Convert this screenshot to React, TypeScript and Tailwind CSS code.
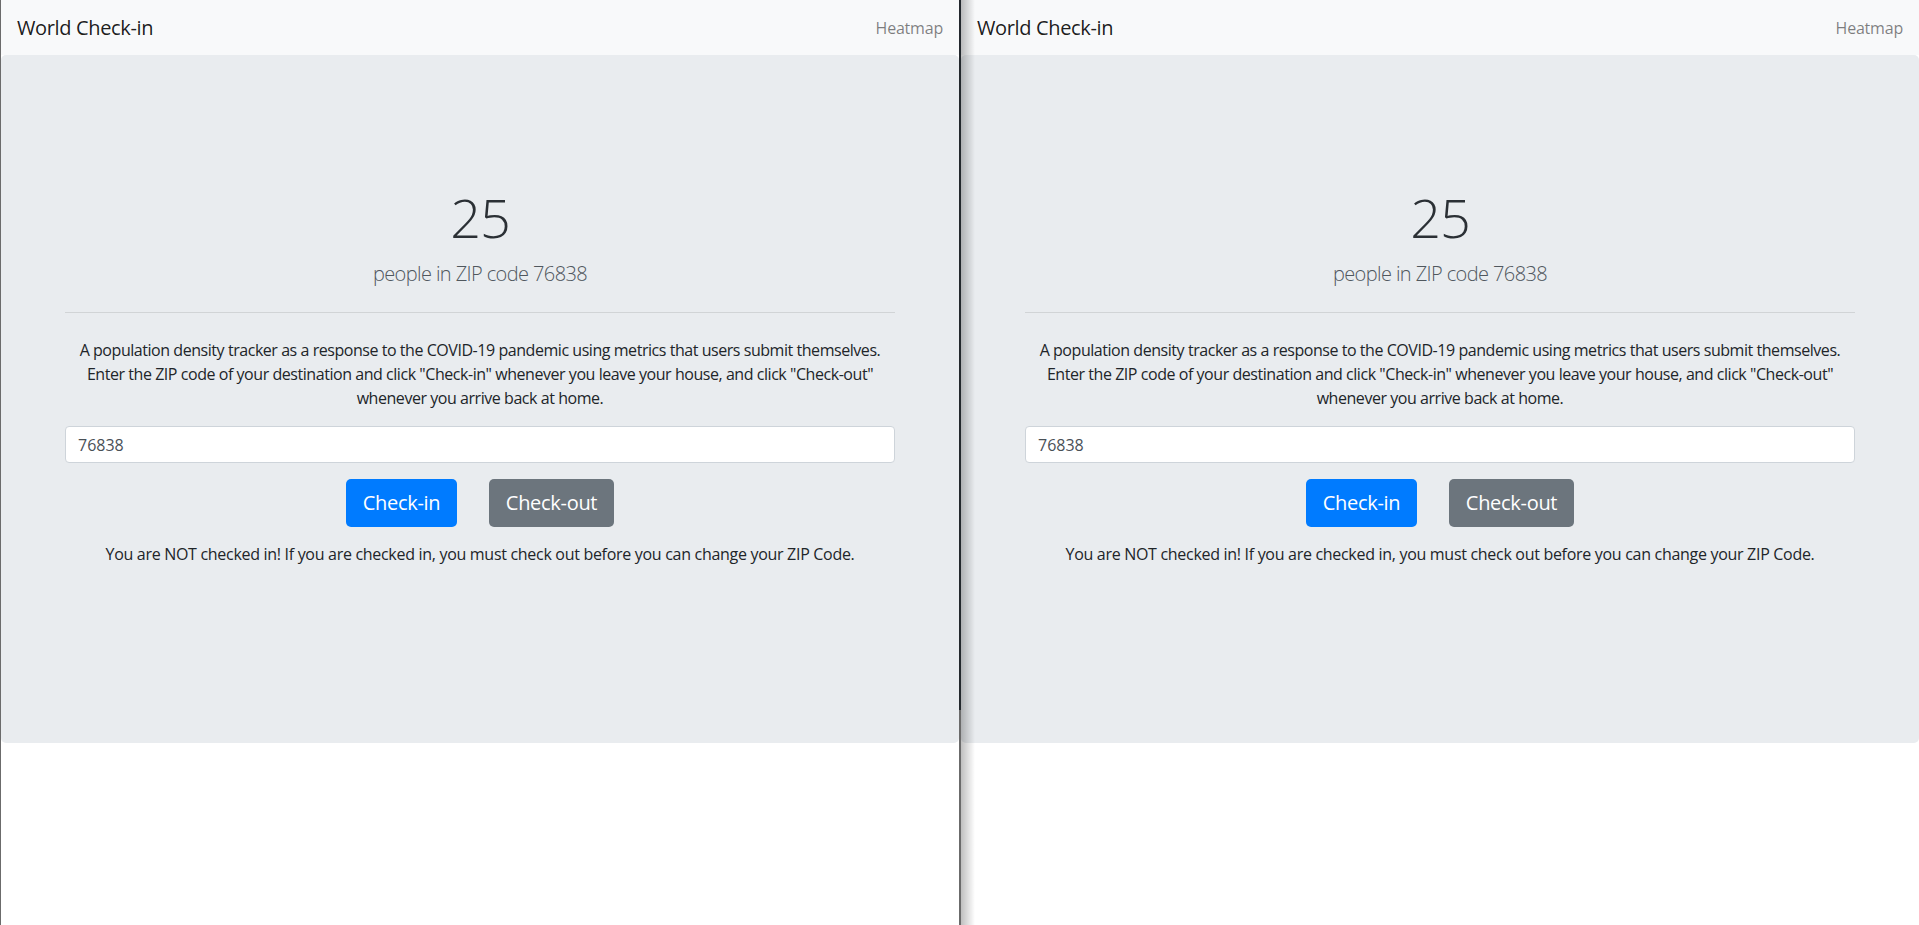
import React from "react";

const font = "font-['Open_Sans','Noto_Sans',sans-serif]";

function Pane({ shaded }: { shaded?: boolean }) {
  return (
    <div className="relative flex w-[958px] shrink-0 flex-col bg-white">
      {shaded && (
        <div className="pointer-events-none absolute inset-y-0 left-0 z-10 w-[14px] bg-linear-to-r from-black/25 to-transparent" />
      )}
      <nav className="flex h-[55px] items-center justify-between bg-[#f8f9fa] px-[16px]">
        <span className="text-[20px] leading-[30px] tracking-[-0.35px] text-black/90">World Check-in</span>
        <a className="text-[16px] leading-[24px] tracking-[-0.2px] text-black/50">Heatmap</a>
      </nav>
      <div className="flex h-[688px] flex-col items-center rounded-[5px] bg-[#e9ecef] px-[64px] pt-[129px] text-[#212529]">
        <h1 className="text-[54px] font-light leading-[67px] tracking-[-1px] text-[#2b3035]">25</h1>
        <p className="mt-[8px] text-[20px] font-light leading-[30px] tracking-[-0.6px] text-[#50575e]">
          people in ZIP code 76838
        </p>
        <hr className="mt-[23px] w-full border-t border-black/10" />
        <p className="mt-[25px] whitespace-nowrap text-center text-[16px] leading-[24px] tracking-[-0.45px]">
          A population density tracker as a response to the COVID-19 pandemic using metrics that users submit themselves.
          <br />
          Enter the ZIP code of your destination and click "Check-in" whenever you leave your house, and click "Check-out"
          <br />
          whenever you arrive back at home.
        </p>
        <input
          readOnly
          value="76838"
          className="mt-[16px] h-[37px] w-full rounded-[4px] border border-[#ced4da] bg-white px-[12px] text-[16px] text-[#495057] outline-none"
        />
        <div className="mt-[16px] flex gap-[32px]">
          <button className="h-[48px] w-[111px] rounded-[5px] bg-[#007bff] text-[20px] tracking-[-0.3px] text-white">
            Check-in
          </button>
          <button className="h-[48px] w-[125px] rounded-[5px] bg-[#6c757d] text-[20px] tracking-[-0.3px] text-white">
            Check-out
          </button>
        </div>
        <p className="mt-[15px] text-center text-[16px] leading-[24px] tracking-[-0.3px]">
          You are NOT checked in! If you are checked in, you must check out before you can change your ZIP Code.
        </p>
      </div>
    </div>
  );
}

export default function App() {
  return (
    <div className={`flex h-[925px] w-[1919px] overflow-hidden bg-white ${font}`}>
      <div className="flex border-l border-[#6b6b6b]">
        <Pane />
      </div>
      <div className="flex w-[2px] shrink-0 flex-col">
        <div className="h-[710px] bg-[#23282d]" />
        <div className="flex-1 bg-[#6b6b6b]" />
      </div>
      <Pane shaded />
    </div>
  );
}
